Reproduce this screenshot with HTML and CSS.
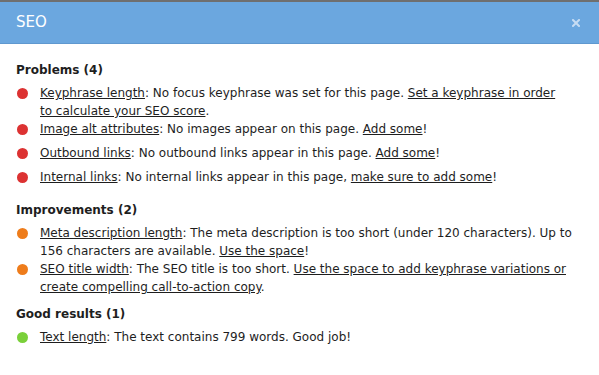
FILE: index.html
```html
<!DOCTYPE html>
<html lang="en">
<head>
<meta charset="UTF-8">
<meta name="viewport" content="width=device-width, initial-scale=1.0">
<title>SEO</title>
<link rel="stylesheet" href="styles.css">
</head>
<body>
<div class="modal">
  <div class="modal-header">
    <h1 class="modal-title">SEO</h1>
    <button class="modal-close" aria-label="Close">
      <svg width="8" height="8" viewBox="0 0 8 8"><path d="M1 1L7 7M7 1L1 7" stroke="currentColor" stroke-width="2" stroke-linecap="square"/></svg>
    </button>
  </div>
  <div class="modal-body">
    <h2 class="group-title">Problems (4)</h2>
    <ul class="results">
      <li class="result"><span class="dot bad"></span><p><a href="#">Keyphrase length</a>: No focus keyphrase was set for this page. <a href="#">Set a keyphrase in order<br>to calculate your SEO score</a>.</p></li>
      <li class="result"><span class="dot bad"></span><p><a href="#">Image alt attributes</a>: No images appear on this page. <a href="#">Add some</a>!</p></li>
      <li class="result"><span class="dot bad"></span><p><a href="#">Outbound links</a>: No outbound links appear in this page. <a href="#">Add some</a>!</p></li>
      <li class="result"><span class="dot bad"></span><p><a href="#">Internal links</a>: No internal links appear in this page, <a href="#">make sure to add some</a>!</p></li>
    </ul>
    <h2 class="group-title">Improvements (2)</h2>
    <ul class="results">
      <li class="result"><span class="dot ok"></span><p><a href="#">Meta description length</a>: The meta description is too short (under 120 characters). Up to 156 characters are available. <a href="#">Use the space</a>!</p></li>
      <li class="result"><span class="dot ok"></span><p><a href="#">SEO title width</a>: The SEO title is too short. <a href="#">Use the space to add keyphrase variations or create compelling call-to-action copy</a>.</p></li>
    </ul>
    <h2 class="group-title">Good results (1)</h2>
    <ul class="results">
      <li class="result"><span class="dot good"></span><p><a href="#">Text length</a>: The text contains 799 words. Good job!</p></li>
    </ul>
  </div>
</div>
</body>
</html>
```

FILE: styles.css
```css
*{margin:0;padding:0;box-sizing:border-box;}
:root{
  --header:#6ba7df;
  --header-border:#5f98cf;
  --text:#1e1e1e;
  --bad:#dc3232;
  --ok:#ee7c1b;
  --good:#7ad03a;
}
body{font-family:"DejaVu Sans",Verdana,sans-serif;font-size:12px;color:var(--text);background:#fff;}
.modal{width:599px;height:375px;border-top:2px solid #6f6f6f;background:#fff;}
.modal-header{height:42px;background:var(--header);border-bottom:1px solid var(--header-border);display:flex;align-items:center;justify-content:space-between;padding:0 19px 0 16px;}
.modal-title{font-size:15px;font-weight:normal;color:#fff;line-height:1;}
.modal-close{background:none;border:none;color:#c6dcf3;display:flex;cursor:pointer;}
.modal-body{padding:17px 20px 0 16px;}
.group-title{font-size:12px;font-weight:bold;line-height:18px;margin-bottom:5px;}
.results{list-style:none;margin-bottom:9px;}
.result{display:flex;align-items:flex-start;min-height:24px;}
.result p{line-height:18px;}
.dot{flex:none;width:11px;height:11px;border-radius:50%;margin:4px 12px 0 1px;}
.dot.bad{background:var(--bad);}
.dot.ok{background:var(--ok);}
.dot.good{background:var(--good);}
a{color:var(--text);text-decoration:underline;}
```
